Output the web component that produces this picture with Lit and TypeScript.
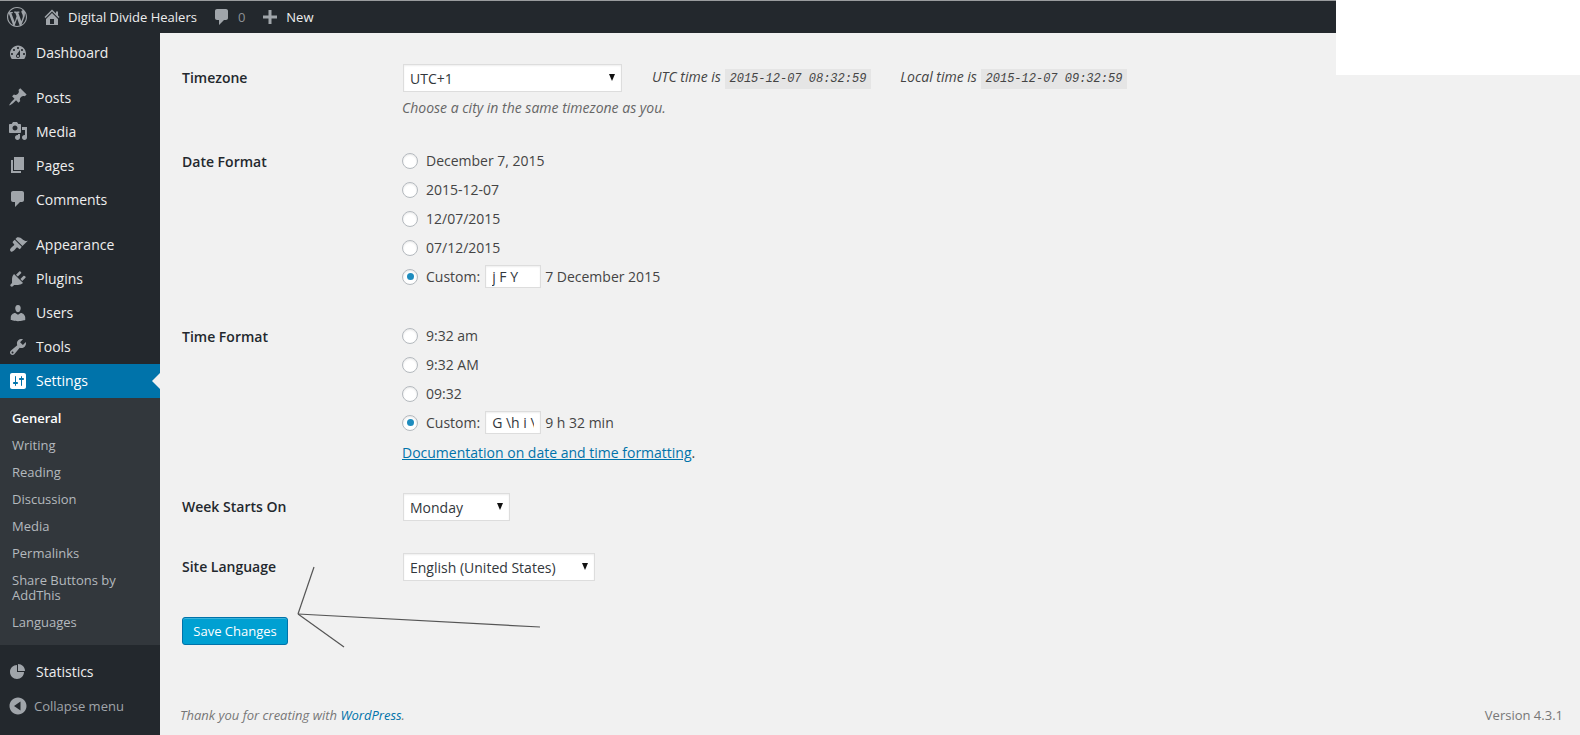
import { LitElement, html, css, svg } from "lit";
import { customElement } from "lit/decorators.js";

const P: Record<string, string> = {
  wp: "M20 10c0-5.510-4.490-10-10-10C4.480 0 0 4.490 0 10c0 5.520 4.480 10 10 10 5.510 0 10-4.480 10-10zM7.780 15.370L4.370 6.220c.550-.020 1.170-.080 1.170-.080.500-.060.440-1.130-.060-1.110 0 0-1.450.110-2.370.110-.180 0-.370 0-.580-.010C4.120 2.690 6.910 1.030 10 1.030c2.300 0 4.390.870 5.970 2.300-.660-.110-1.600.380-1.600 1.540 0 .720.430 1.320.880 2.040.350.610.550 1.360.550 2.460 0 1.490-1.400 5-1.400 5l-3.030-8.370c.540-.020.820-.170.820-.170.500-.050.440-1.250-.060-1.220 0 0-1.440.120-2.380.120-.870 0-2.330-.120-2.330-.120-.500-.030-.560 1.200-.060 1.220l.920.080 1.260 3.410zM17.410 10c.240-.640.740-1.870.430-4.250.700 1.290 1.050 2.710 1.050 4.250 0 3.290-1.730 6.240-4.400 7.780.970-2.590 1.940-5.200 2.920-7.780zM6.100 18.090C3.120 16.650 1.110 13.530 1.110 10c0-1.300.230-2.480.72-3.590C3.250 10.300 4.670 14.200 6.100 18.090zm4.030-6.630l2.580 6.980c-.860.290-1.760.450-2.710.45-.790 0-1.570-.110-2.290-.330.810-2.380 1.620-4.740 2.420-7.100z",
  home: "M16 8.500l1.530 1.530-1.060 1.060L10 4.620l-6.470 6.470-1.060-1.060L10 2.500l4 4v-2h2v4zm-6-2.460l6 5.990V18H4v-5.970zM12 17v-5H8v5h4z",
  comment: "M5 2h9c1.100 0 2 .9 2 2v7c0 1.100-.9 2-2 2h-2l-5 5v-5H5c-1.100 0-2-.9-2-2V4c0-1.100.9-2 2-2z",
  plus: "M8.500 3h3v5.500H17v3h-5.500V17h-3v-5.500H3v-3h5.500z",
  dash: "M3.760 16h12.480c1.100-1.430 1.760-3.210 1.760-5.140C18 6.240 14.410 2.500 10 2.500S2 6.240 2 10.860c0 1.930.66 3.710 1.760 5.140zM10 4c.55 0 1 .45 1 1s-.45 1-1 1-1-.45-1-1 .45-1 1-1zM6 6c.55 0 1 .45 1 1s-.45 1-1 1-1-.45-1-1 .45-1 1-1zm8 0c.55 0 1 .45 1 1s-.45 1-1 1-1-.45-1-1 .45-1 1-1zm-5.370 5.550L12 7v6c0 1.100-.9 2-2 2s-2-.9-2-2c0-.57.24-1.080.63-1.450zM4 10c.55 0 1 .45 1 1s-.45 1-1 1-1-.45-1-1 .45-1 1-1zm12 0c.55 0 1 .45 1 1s-.45 1-1 1-1-.45-1-1 .45-1 1-1zm-5 3c0-.55-.45-1-1-1s-1 .45-1 1 .45 1 1 1 1-.45 1-1z",
  pin: "M10.440 3.020l1.820-1.820 6.360 6.350-1.830 1.820c-1.050-.68-2.480-.57-3.410.36l-.75.75c-.92.930-1.040 2.350-.35 3.400l-1.830 1.820-2.410-2.410-2.800 2.790c-.42.420-3.380 2.710-3.800 2.290s1.860-3.390 2.280-3.810l2.790-2.790L4.100 9.360l1.830-1.820c1.050.69 2.480.57 3.400-.36l.75-.75c.93-.92 1.050-2.350.36-3.410z",
  media: "M13 11V4c0-.55-.45-1-1-1h-1.670L9 1H5L3.670 3H2c-.55 0-1 .45-1 1v7c0 .55.45 1 1 1h10c.55 0 1-.45 1-1zM7 4.500c1.380 0 2.500 1.120 2.500 2.500S8.380 9.500 7 9.500 4.500 8.380 4.500 7 5.620 4.500 7 4.500zM14 6h5v10.500c0 1.380-1.120 2.500-2.500 2.500S14 17.880 14 16.500s1.120-2.500 2.500-2.500c.17 0 .34.020.5.050V9h-3V6zm-4 8.050V13h2v3.500c0 1.380-1.120 2.500-2.500 2.500S7 17.880 7 16.500 8.120 14 9.500 14c.17 0 .34.020.5.050z",
  pages: "M6 15V2h10v13H6zm-1 1h8v2H3V5h2v11z",
  brush: "M14.480 11.060L7.410 3.990l1.500-1.500c.5-.56 2.300-.47 3.510.32 1.210.8 1.430 1.280 2.910 2.100 1.180.64 2.450 1.260 4.450.85zm-.71.710L6.700 4.700 4.930 6.470c-.39.390-.39 1.020 0 1.410l1.060 1.060c.39.390.39 1.030 0 1.420-.6.600-1.600 1.260-2.820 2.470-1.210 1.210-1.590 2.380-.59 3.380 1.020 1 2.190.63 3.400-.59 1.210-1.220 1.870-2.220 2.470-2.820.39-.39 1.030-.39 1.420 0l1.060 1.060c.39.390 1.020.39 1.410 0z",
  plug: "M13.110 4.360L9.870 7.600 8 5.730l3.240-3.240c.35-.34 1.050-.2 1.560.32.52.51.66 1.210.31 1.550zm-8 1.770l.91-1.120 9.010 9.010-1.190.84c-.71.710-2.630 1.160-3.820 1.160H6.140L4.900 17.260c-.59.590-1.540.59-2.120 0-.59-.58-.59-1.530 0-2.120l1.240-1.240v-3.880c0-1.130.4-3.190 1.090-3.890zm7.260 3.970l3.240-3.240c.34-.35 1.040-.21 1.550.31.520.51.66 1.210.31 1.550l-3.240 3.250z",
  users: "M10 9.250c-2.270 0-2.730-3.440-2.730-3.440C7 4.020 7.820 2 9.970 2c2.160 0 2.980 2.020 2.710 3.810 0 0-.41 3.440-2.680 3.440zm0 2.570L12.720 10c2.390 0 4.520 2.330 4.520 4.530v2.490s-3.650 1.130-7.240 1.130c-3.650 0-7.240-1.130-7.240-1.130v-2.490c0-2.250 1.940-4.480 4.470-4.480z",
  tools: "M16.680 9.770c-1.340 1.340-3.300 1.670-4.950.99l-5.410 6.520c-.99.990-2.590.99-3.580 0s-.99-2.590 0-3.570l6.520-5.420c-.68-1.650-.35-3.610.99-4.950 1.280-1.280 3.120-1.620 4.720-1.060l-2.890 2.890 2.820 2.820 2.860-2.870c.53 1.580.18 3.400-1.080 4.650zM3.810 16.210c.4.390 1.030.39 1.430 0 .4-.4.400-1.030 0-1.430-.4-.39-1.030-.39-1.430 0-.39.4-.39 1.030 0 1.430z",
  settings: "M18 16V4c0-1.100-.9-2-2-2H4c-1.100 0-2 .9-2 2v12c0 1.100.9 2 2 2h12c1.100 0 2-.9 2-2zM8 11h1c.55 0 1 .45 1 1s-.45 1-1 1H8v1.500c0 .280-.22.500-.5.500s-.5-.22-.5-.5V13H6c-.55 0-1-.45-1-1s.45-1 1-1h1V5.500c0-.28.22-.5.5-.5s.5.22.5.5V11zm5-2h-1c-.55 0-1-.45-1-1s.45-1 1-1h1V5.500c0-.28.22-.5.5-.5s.5.22.5.5V7h1c.55 0 1 .45 1 1s-.45 1-1 1h-1v5.500c0 .28-.22.5-.5.5s-.5-.22-.5-.5V9z",
  pie: "M10 10V3c3.870 0 7 3.130 7 7h-7zM9 4v7h7c0 3.870-3.130 7-7 7s-7-3.130-7-7 3.130-7 7-7z",
  collapse: "M10 1.500c4.700 0 8.500 3.800 8.500 8.500s-3.800 8.500-8.500 8.500S1.500 14.700 1.500 10 5.300 1.500 10 1.500zM12.500 5.500L6 10l6.500 4.500z",
};

const icon = (n: string, cls = "") =>
  html`<svg class="ic ${cls}" viewBox="0 0 20 20" aria-hidden="true">${svg`<path fill-rule="evenodd" d=${P[n]}></path>`}</svg>`;

@customElement("app-root")
export class AppRoot extends LitElement {
  static styles = css`
    :host { display: block; width: 100%; height: 735px; position: relative; overflow: hidden;
      background: #f1f1f1; font-family: "Open Sans", sans-serif; font-size: 14px; color: #444; }
    * { box-sizing: border-box; }
    .ic { fill: currentColor; display: block; flex: none; }
    .page { display: flex; flex-direction: column; height: 735px; }

    .bar { height: 33px; flex: none; background: #23282d; border-top: 1px solid #9a9c9e; display: flex;
      align-items: center; color: #eee; font-size: 13px; padding-left: 7px; }
    .bar .ic { color: #a0a5aa; }
    .bar .logo { width: 20px; height: 20px; }
    .bar .home { width: 20px; height: 20px; margin-left: 15px; }
    .bar .site { margin-left: 6px; }
    .bar .cmt { width: 20px; height: 20px; margin-left: 15px; }
    .bar .count { margin-left: 6px; color: #8d9196; }
    .bar .plus { width: 20px; height: 20px; margin-left: 15px; }
    .bar .new { margin-left: 6px; }

    .body { flex: 1; display: flex; min-height: 0; }
    nav { width: 160px; flex: none; background: #23282d; padding-top: 3px; color: #eee; }
    nav ul { list-style: none; margin: 0; padding: 0; }
    .item { height: 34px; display: flex; align-items: center; padding-left: 8px; position: relative; }
    .item .ic { width: 20px; height: 20px; color: #a0a5aa; }
    .item span { margin-left: 8px; }
    .item.up span { margin-bottom: 2px; }
    .item.active { background: #0073aa; color: #fff; }
    .item.active .ic { color: #fff; }
    .item.active::after { content: ""; position: absolute; right: 0; top: 9px; border: 8px solid transparent;
      border-right-color: #f1f1f1; border-left-width: 0; }
    .gap1 { margin-top: 10px; }
    .gap2 { margin-top: 12px; }
    .gap3 { margin-top: 9px; }
    .sub { background: #32373c; padding: 7px 30px 9px 12px; font-size: 13px; color: #b4b9be; }
    .sub li { padding: 6px 0; line-height: 15px; }
    .sub .cur { color: #fff; font-weight: 600; }
    .collapse { height: 34px; display: flex; align-items: center; padding-left: 8px; color: #a0a5aa; font-size: 13px; margin-top: 1px; }
    .collapse .ic { width: 20px; height: 20px; }
    .collapse span { margin-left: 6px; }

    main { flex: 1; display: flex; flex-direction: column; padding: 31px 17px 0 22px; min-width: 0; }
    .form { display: flex; flex-direction: column; }
    .row { display: grid; grid-template-columns: 220px 1fr; }
    .row > .lab { color: #23282d; font-weight: 600; line-height: 20px; }
    .row.tz { margin-bottom: 28px; }
    .row.tz .lab { padding-top: 4px; }
    .row.date { margin-bottom: 30px; }
    .row.date .lab, .row.time .lab { padding-top: 6px; }
    .row.time { margin-bottom: 30px; }
    .row.week { margin-bottom: 32px; }
    .row.week .lab, .row.lang .lab { padding-top: 4px; }
    .inline { display: flex; align-items: center; height: 28px; }
    .selwrap { position: relative; height: 28px; flex: none; margin-left: 1px; }
    .selwrap::after { content: ""; position: absolute; right: 7px; top: 10px; border: 3.5px solid transparent;
      border-top: 7px solid #111; border-bottom: 0; pointer-events: none; }
    select { appearance: none; -webkit-appearance: none; display: block; width: 100%; height: 28px; border: 1px solid #ddd;
      background: #fff; border-radius: 0; padding: 0 6px; font: 14px "Open Sans", sans-serif; color: #32373c; box-shadow: inset 0 1px 2px rgba(0,0,0,.07); }
    .w-tz { width: 219px; }
    .w-week { width: 107px; }
    .w-lang { width: 192px; }
    .times { font-style: italic; margin-left: 30px; }
    .times.b { margin-left: 29px; }
    code { font: italic 12px "Liberation Mono", monospace; background: #e5e5e5; padding: 4px 5px; color: #444; display: inline-block; line-height: 12px; }
    .hint { font-style: italic; color: #666; line-height: 20px; margin: 6px 0 0; font-size: 14px; }
    .opt { height: 29px; display: flex; align-items: center; }
    input[type=radio] { appearance: none; -webkit-appearance: none; width: 16px; height: 16px; margin: 0 8px 0 0; border-radius: 50%; border: 1px solid #b4b9be;
      background: #fff; box-shadow: inset 0 1px 2px rgba(0,0,0,.1); display: grid; place-items: center; flex: none; }
    input[type=radio]:checked::before { content: ""; width: 7px; height: 7px; border-radius: 50%; background: #1e8cbe; }
    input[type=text] { width: 56px; height: 23px; border: 1px solid #ddd; background: #fff; padding: 0 6px; margin: 0 4px 0 5px;
      font: 14px "Open Sans", sans-serif; color: #32373c; box-shadow: inset 0 1px 2px rgba(0,0,0,.07); }
    .doc { line-height: 20px; margin: 6px 0 0; }
    a { color: #0073aa; }
    .footer a { text-decoration: none; }
    button { display: block; width: 106px; height: 28px; margin-top: 36px; border: 1px solid #0073aa; border-radius: 3px; background: #00a0d2; color: #fff;
      font: 13px "Open Sans", sans-serif; padding: 0; box-shadow: inset 0 1px 0 rgba(120,200,230,.5); }
    .footer { margin-top: auto; height: 30px; display: flex; justify-content: space-between; font-size: 13px; color: #777; margin-left: -2px; line-height: 20px; }
    .footer em { font-style: italic; }

    .patch { position: absolute; top: 0; right: 0; width: 244px; height: 75px; background: #fff; }
    .marks { position: absolute; left: 0; top: 0; width: 1580px; height: 735px; pointer-events: none; }
    .marks line { stroke: #555; stroke-width: 1.2; }
  `;

  render() {
    return html`
      <div class="page">
        <header class="bar">
          ${icon("wp", "logo")}${icon("home", "home")}
          <span class="site">Digital Divide Healers</span>
          ${icon("comment", "cmt")}<span class="count">0</span>
          ${icon("plus", "plus")}<span class="new">New</span>
        </header>
        <div class="body">
          <nav>
            <ul>
              <li class="item up">${icon("dash")}<span>Dashboard</span></li>
              <li class="item gap1">${icon("pin")}<span>Posts</span></li>
              <li class="item">${icon("media")}<span>Media</span></li>
              <li class="item">${icon("pages")}<span>Pages</span></li>
              <li class="item">${icon("comment")}<span>Comments</span></li>
              <li class="item up gap2">${icon("brush")}<span>Appearance</span></li>
              <li class="item up">${icon("plug")}<span>Plugins</span></li>
              <li class="item up">${icon("users")}<span>Users</span></li>
              <li class="item up">${icon("tools")}<span>Tools</span></li>
              <li class="item up active">${icon("settings")}<span>Settings</span></li>
            </ul>
            <ul class="sub">
              <li class="cur">General</li>
              <li>Writing</li>
              <li>Reading</li>
              <li>Discussion</li>
              <li>Media</li>
              <li>Permalinks</li>
              <li>Share Buttons by AddThis</li>
              <li>Languages</li>
            </ul>
            <ul>
              <li class="item gap3">${icon("pie")}<span>Statistics</span></li>
            </ul>
            <div class="collapse">${icon("collapse")}<span>Collapse menu</span></div>
          </nav>
          <main>
            <div class="form">
              <div class="row tz">
                <div class="lab">Timezone</div>
                <div>
                  <div class="inline">
                    <div class="selwrap w-tz"><select><option>UTC+1</option></select></div>
                    <span class="times">UTC time is <code>2015-12-07 08:32:59</code></span>
                    <span class="times b">Local time is <code>2015-12-07 09:32:59</code></span>
                  </div>
                  <p class="hint">Choose a city in the same timezone as you.</p>
                </div>
              </div>
              <div class="row date">
                <div class="lab">Date Format</div>
                <div>
                  <label class="opt"><input type="radio" name="d" />December 7, 2015</label>
                  <label class="opt"><input type="radio" name="d" />2015-12-07</label>
                  <label class="opt"><input type="radio" name="d" />12/07/2015</label>
                  <label class="opt"><input type="radio" name="d" />07/12/2015</label>
                  <label class="opt"><input type="radio" name="d" checked />Custom:<input type="text" value="j F Y" />7 December 2015</label>
                </div>
              </div>
              <div class="row time">
                <div class="lab">Time Format</div>
                <div>
                  <label class="opt"><input type="radio" name="t" />9:32 am</label>
                  <label class="opt"><input type="radio" name="t" />9:32 AM</label>
                  <label class="opt"><input type="radio" name="t" />09:32</label>
                  <label class="opt"><input type="radio" name="t" checked />Custom:<input type="text" value="G \\h i \\m\\i\\n" />9 h 32 min</label>
                  <p class="doc"><a href="#">Documentation on date and time formatting</a>.</p>
                </div>
              </div>
              <div class="row week">
                <div class="lab">Week Starts On</div>
                <div class="selwrap w-week"><select><option>Monday</option></select></div>
              </div>
              <div class="row lang">
                <div class="lab">Site Language</div>
                <div class="selwrap w-lang"><select><option>English (United States)</option></select></div>
              </div>
            </div>
            <button>Save Changes</button>
            <footer class="footer">
              <em>Thank you for creating with <a href="#">WordPress</a>.</em>
              <span>Version 4.3.1</span>
            </footer>
          </main>
        </div>
      </div>
      <div class="patch"></div>
      <svg class="marks" viewBox="0 0 1580 735">
        <line x1="298" y1="614" x2="314" y2="567"></line>
        <line x1="298" y1="614" x2="540" y2="627"></line>
        <line x1="298" y1="614" x2="344" y2="647"></line>
      </svg>
    `;
  }
}
